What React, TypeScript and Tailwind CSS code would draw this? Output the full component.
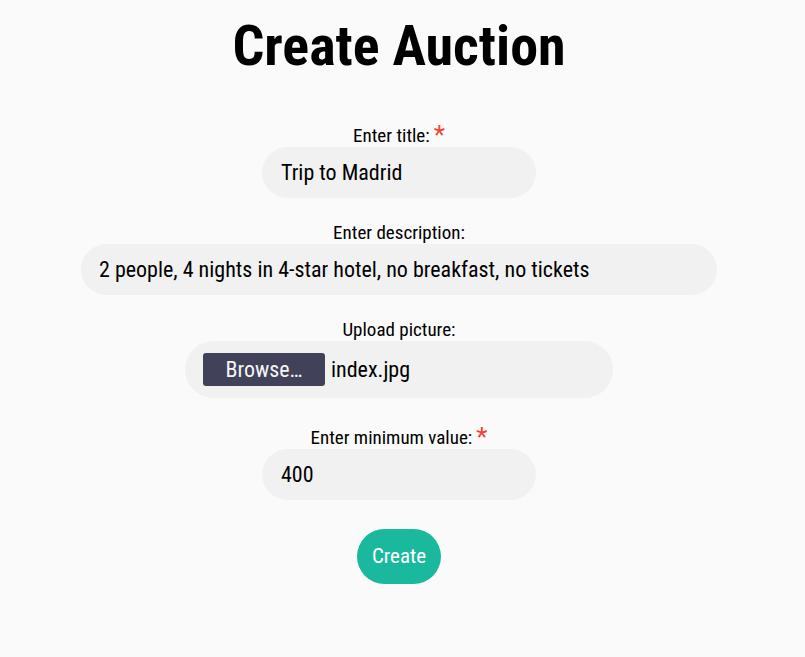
import React from "react";

const font = { fontFamily: '"Roboto Condensed", Roboto, "Liberation Sans Narrow", sans-serif', fontStretch: "75%" } as React.CSSProperties;

function Label({ text, required }: { text: string; required?: boolean }) {
  return (
    <div className="flex items-start h-[22px] text-[19px] leading-[22px] text-black">
      <span>{text}</span>
      {required && <span className="text-[#f44336] text-[26px] leading-[20px] ml-[4px]">*</span>}
    </div>
  );
}

export default function App() {
  return (
    <div className="min-h-[657px] w-full bg-[#fafafa] flex flex-col items-center pr-[7px]" style={font}>
      <h1 className="text-[56px] font-bold leading-none mt-[18px] text-black">Create Auction</h1>
      <div className="mt-[51px] flex flex-col items-center">
        <Label text="Enter title:" required />
        <div className="w-[274px] h-[51px] rounded-full bg-[#f1f1f1] flex items-center pl-[19px] text-[22px] text-black">Trip to Madrid</div>
      </div>
      <div className="mt-[24px] flex flex-col items-center">
        <Label text="Enter description:" />
        <div className="w-[636px] h-[51px] rounded-full bg-[#f1f1f1] flex items-center pl-[18px] text-[22px] text-black">2 people, 4 nights in 4-star hotel, no breakfast, no tickets</div>
      </div>
      <div className="mt-[24px] flex flex-col items-center">
        <Label text="Upload picture:" />
        <div className="w-[428px] h-[57px] rounded-full bg-[#f1f1f1] flex items-center pl-[18px] text-[22px] text-black">
          <div className="w-[122px] h-[33px] rounded-[3px] bg-[#41415a] text-[#f5f5f5] flex items-center justify-center">Browse…</div>
          <span className="ml-[6px]">index.jpg</span>
        </div>
      </div>
      <div className="mt-[29px] flex flex-col items-center">
        <Label text="Enter minimum value:" required />
        <div className="w-[274px] h-[51px] rounded-full bg-[#f1f1f1] flex items-center pl-[19px] text-[22px] text-black">400</div>
      </div>
      <button className="mt-[29px] w-[84px] h-[55px] rounded-full bg-[#1ab99e] text-white text-[21px]">Create</button>
    </div>
  );
}
